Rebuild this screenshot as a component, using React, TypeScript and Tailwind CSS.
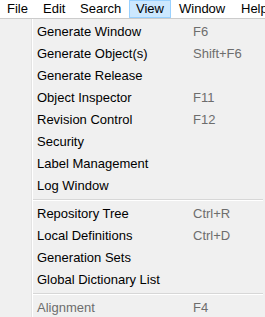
import React from "react";

type Item = { label: string; shortcut?: string; disabled?: boolean } | "sep";

const items: Item[] = [
  { label: "Generate Window", shortcut: "F6" },
  { label: "Generate Object(s)", shortcut: "Shift+F6" },
  { label: "Generate Release" },
  { label: "Object Inspector", shortcut: "F11" },
  { label: "Revision Control", shortcut: "F12" },
  { label: "Security" },
  { label: "Label Management" },
  { label: "Log Window" },
  "sep",
  { label: "Repository Tree", shortcut: "Ctrl+R" },
  { label: "Local Definitions", shortcut: "Ctrl+D" },
  { label: "Generation Sets" },
  { label: "Global Dictionary List" },
  "sep",
  { label: "Alignment", shortcut: "F4", disabled: true },
];

export default function App() {
  return (
    <div
      className="w-[265px] h-[317px] overflow-hidden bg-[#f0f0f0] text-[13px] text-black"
      style={{ fontFamily: '"Liberation Sans", Arial, sans-serif' }}
    >
      <div className="h-[18px] bg-white flex whitespace-nowrap leading-[18px]">
        <div className="w-[36px] shrink-0 pl-[7px]">File</div>
        <div className="w-[37px] shrink-0 pl-[7px]">Edit</div>
        <div className="w-[56px] shrink-0 pl-[7px]">Search</div>
        <div className="w-[42px] h-[18px] shrink-0 pl-[6px] border border-[#99d1ff] bg-[#cce8ff] leading-[16px]">
          View
        </div>
        <div className="w-[63px] shrink-0 pl-[8px]">Window</div>
        <div className="shrink-0 pl-[7px]">Help</div>
      </div>
      <div className="border-t border-[#cccccc] flex h-[299px]">
        <div className="w-[31px] shrink-0" />
        <div className="w-px shrink-0 bg-[#e3e3e3]" />
        <div className="w-px shrink-0 bg-white" />
        <div className="flex-1 flex flex-col pt-[2px] pr-[2px]">
          {items.map((it, i) =>
            it === "sep" ? (
              <div key={i} className="h-[6px] shrink-0 flex flex-col pt-[2px]">
                <div className="h-px bg-[#d7d7d7]" />
                <div className="h-px bg-white" />
              </div>
            ) : (
              <div
                key={i}
                className={`h-[22px] shrink-0 flex items-center pl-[4px] whitespace-nowrap ${
                  it.disabled ? "text-[#6d6d6d]" : "text-black"
                }`}
              >
                <span className="w-[156px] shrink-0">{it.label}</span>
                {it.shortcut && (
                  <span className="text-[#6d6d6d]">{it.shortcut}</span>
                )}
              </div>
            )
          )}
        </div>
      </div>
    </div>
  );
}
